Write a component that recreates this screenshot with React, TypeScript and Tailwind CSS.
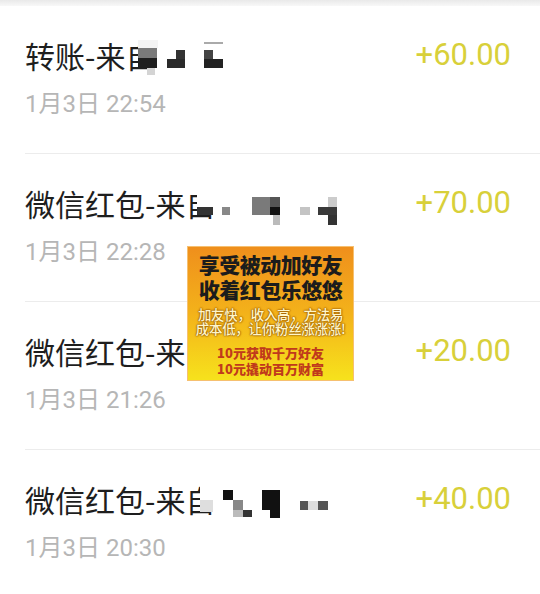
import React from "react";

type Cell = [number, number, number, number, string];

interface Txn {
  title: string;
  date: string;
  amount: string;
  mosaic: Cell[];
}

const txns: Txn[] = [
  {
    title: "转账-来自",
    date: "1月3日 22:54",
    amount: "+60.00",
    mosaic: [
      [113, 3, 20, 8, "#f4f4f4"],
      [113, 11, 19, 10, "#7a7a7a"],
      [113, 21, 19, 10, "#1e1e1e"],
      [122, 31, 8, 7, "#d4d4d4"],
      [151, 13, 9, 9, "#333"],
      [142, 22, 18, 9, "#2a2a2a"],
      [179, 5, 19, 2, "#aaa"],
      [179, 13, 9, 9, "#444"],
      [179, 22, 19, 9, "#222"],
    ],
  },
  {
    title: "微信红包-来自",
    date: "1月3日 22:28",
    amount: "+70.00",
    mosaic: [
      [172, 2, 30, 20, "#fff"],
      [172, 22, 16, 8, "#333"],
      [188, 22, 14, 8, "#fff"],
      [197, 22, 8, 8, "#888"],
      [227, 12, 18, 18, "#7a7a7a"],
      [245, 12, 10, 10, "#555"],
      [245, 22, 10, 8, "#111"],
      [248, 30, 7, 10, "#bbb"],
      [275, 22, 10, 8, "#c4c4c4"],
      [303, 12, 9, 10, "#ccc"],
      [293, 22, 19, 8, "#3a3a3a"],
      [303, 30, 9, 10, "#333"],
    ],
  },
  {
    title: "微信红包-来自",
    date: "1月3日 21:26",
    amount: "+20.00",
    mosaic: [],
  },
  {
    title: "微信红包-来自",
    date: "1月3日 20:30",
    amount: "+40.00",
    mosaic: [
      [175, 2, 28, 17, "#fff"],
      [175, 19, 13, 12, "#dedede"],
      [188, 19, 15, 14, "#fff"],
      [198, 9, 10, 10, "#111"],
      [208, 19, 10, 10, "#888"],
      [208, 29, 10, 7, "#bbb"],
      [218, 29, 9, 7, "#333"],
      [237, 9, 18, 20, "#111"],
      [245, 29, 10, 8, "#111"],
      [275, 20, 8, 9, "#555"],
      [283, 20, 10, 9, "#ddd"],
      [293, 20, 10, 9, "#555"],
    ],
  },
];

function Row({ t, last }: { t: Txn; last: boolean }) {
  return (
    <div className="pl-[25px]">
      <div
        className={
          "flex items-start justify-between pt-[31px] pb-[35px] pr-[30px] " +
          (last ? "" : "border-b border-[#ececec]")
        }
      >
        <div>
          <div className="relative text-[30px] leading-[36px] text-[#1e1e1e] font-['Noto_Sans_CJK_SC',sans-serif] whitespace-nowrap">
            {t.title}
            {t.mosaic.map(([x, y, w, h, c], i) => (
              <span
                key={i}
                className="absolute"
                style={{ left: x, top: y, width: w, height: h, background: c }}
              />
            ))}
          </div>
          <div className="mt-[17px] text-[24px] leading-[28px] text-[#b6b6b6] font-['Roboto','Noto_Sans_CJK_SC',sans-serif]">
            {t.date}
          </div>
        </div>
        <div className="text-[31px] leading-[36px] text-[#d8d03a] font-['Roboto',sans-serif] translate-x-[1px]">
          {t.amount}
        </div>
      </div>
    </div>
  );
}

function Ad() {
  const outline = "[text-shadow:0_0_1px_#9a5a00,0_0_2px_#9a5a00,0_0_2px_#9a5a00]";
  return (
    <div className="absolute left-[187px] top-[246px] w-[167px] h-[135px] border border-[#f6c070] bg-gradient-to-b from-[#ef8f1c] via-[#f3b21a] to-[#f6e21c] flex flex-col items-center pt-[5px] font-['Noto_Sans_CJK_SC',sans-serif]">
      <div className="text-[21px] leading-[25px] font-black text-[#1c1c1c] tracking-[-0.5px]">享受被动加好友</div>
      <div className="text-[21px] leading-[25px] font-black text-[#1c1c1c] tracking-[-0.5px]">收着红包乐悠悠</div>
      <div className={"mt-[5px] text-[13.5px] leading-[14px] font-medium text-[#fff6c8] tracking-[-0.3px] " + outline}>加友快，收入高，方法易</div>
      <div className={"text-[13.5px] leading-[14px] font-medium text-[#fff6c8] tracking-[-0.3px] " + outline}>成本低，让你粉丝涨涨涨!</div>
      <div className="mt-[10px] text-[13px] leading-[16px] font-black text-[#c03a1c]">10元获取千万好友</div>
      <div className="text-[13px] leading-[16px] font-black text-[#c03a1c]">10元撬动百万财富</div>
    </div>
  );
}

export default function App() {
  return (
    <div className="relative w-[540px] h-[594px] overflow-hidden bg-white">
      <div className="h-[6px] bg-gradient-to-b from-[#e9e9e9] to-[#f8f8f8]" />
      {txns.map((t, i) => (
        <Row key={i} t={t} last={i === txns.length - 1} />
      ))}
      <Ad />
    </div>
  );
}
